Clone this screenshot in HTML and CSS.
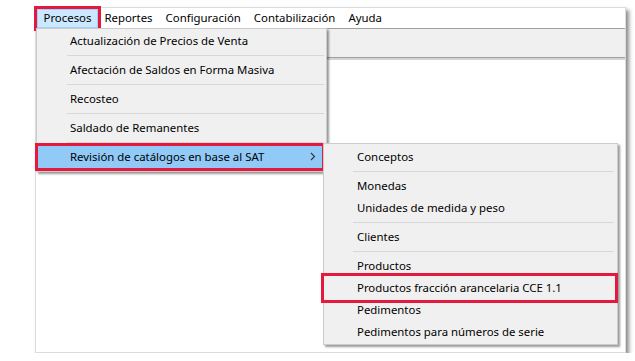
FILE: index.html
```html
<!DOCTYPE html>
<html lang="es">
<head>
  <meta charset="UTF-8" />
  <meta name="viewport" content="width=device-width, initial-scale=1.0" />
  <title>Procesos - Revisión de catálogos</title>
  <link rel="stylesheet" href="styles.css">
</head>
<body>
  <div class="window">
    <nav class="menubar">
      <span class="menubar-item is-open marked">Procesos</span>
      <span class="menubar-item">Reportes</span>
      <span class="menubar-item">Configuración</span>
      <span class="menubar-item">Contabilización</span>
      <span class="menubar-item">Ayuda</span>
    </nav>
    <div class="toolbar"></div>
    <div class="workspace"></div>

    <!-- menu desplegado de Procesos -->
    <ul class="menu menu-procesos">
      <li class="menu-item">Actualización de Precios de Venta</li>
      <li class="menu-sep"></li>
      <li class="menu-item">Afectación de Saldos en Forma Masiva</li>
      <li class="menu-sep"></li>
      <li class="menu-item">Recosteo</li>
      <li class="menu-sep"></li>
      <li class="menu-item">Saldado de Remanentes</li>
      <li class="menu-sep"></li>
      <li class="menu-item is-active marked">
        Revisión de catálogos en base al SAT
        <svg class="chevron" width="6" height="9" viewBox="0 0 6 9"><path d="M1 1 L4.5 4.5 L1 8" fill="none" stroke="#333" stroke-width="1.1"/></svg>
      </li>
    </ul>

    <!-- submenu de catálogos -->
    <ul class="menu menu-sat">
      <li class="menu-item">Conceptos</li>
      <li class="menu-sep"></li>
      <li class="menu-item">Monedas</li>
      <li class="menu-item">Unidades de medida y peso</li>
      <li class="menu-sep"></li>
      <li class="menu-item">Clientes</li>
      <li class="menu-sep"></li>
      <li class="menu-item">Productos</li>
      <li class="menu-item marked marked-wide">Productos fracción arancelaria CCE 1.1</li>
      <li class="menu-item">Pedimentos</li>
      <li class="menu-item">Pedimentos para números de serie</li>
    </ul>
  </div>
</body>
</html>
```

FILE: styles.css
```css
body {
  margin: 0;
  padding: 0;
  background-color: #fff;
  font-family: 'Noto Sans', 'Open Sans', sans-serif;
  font-size: 11.4px;
  color: #000;
}

/* ventana principal */
.window {
  position: relative;
  display: flex;
  flex-direction: column;
  width: 589px;
  height: 344px;
  margin: 7px 0 0 35px;
  border: 1px solid #dcdcdc;
  background-color: #fff;
  box-shadow: 3px 3px 4px rgba(0, 0, 0, 0.45);
}

.menubar {
  display: flex;
  align-items: flex-start;
  height: 20px;
  padding-left: 1px;
}

.menubar-item {
  padding: 0 5.5px;
  height: 17px;
  line-height: 16px;
  margin-top: 1px;
  border: 1px solid transparent;
}

.menubar-item.is-open {
  background-color: #cce8ff;
  border-color: #99d1ff;
}

.toolbar {
  height: 28px;
  background-color: #f0f0f0;
  border-top: 1px solid #a0a0a0;
  border-bottom: 1px solid #a0a0a0;
  box-shadow: 0 2px 0 #d4d4d4;
}

.workspace {
  flex: 1;
  margin-top: 2px;
  background-color: #fff;
}

/* menus desplegables */
.menu {
  position: absolute;
  list-style: none;
  margin: 0;
  background-color: #f0f0f0;
  border: 1px solid #cccccc;
  box-shadow: 2px 2px 2px rgba(0, 0, 0, 0.4);
}

.menu-procesos {
  left: 0;
  top: 20px;
  width: 287px;
  padding: 1px 1px 3px;
}

.menu-sat {
  left: 287px;
  top: 135px;
  width: 291px;
  padding: 2px 1px 1px;
}

.menu-item {
  display: flex;
  align-items: center;
  height: 21px;
  padding-left: 32px;
  padding-bottom: 1px;
  white-space: nowrap;
}

.menu-sep {
  height: 7px;
  position: relative;
}

.menu-sep::after {
  content: "";
  position: absolute;
  left: 29px;
  right: 1px;
  top: 3px;
  border-top: 1px solid #d7d7d7;
}

.menu-sat .menu-sep::after {
  left: 28px;
  right: 2px;
}

.menu-item.is-active {
  background-color: #91c9f7;
  margin-right: 3px;
}

.chevron {
  margin-left: auto;
  margin-right: 6px;
}

/* recuadros rojos de señalamiento */
.marked {
  outline: 3px solid #e5183e;
  outline-offset: 0;
}

.marked-wide {
  margin-right: 2px;
  outline-offset: 1px;
}
```
